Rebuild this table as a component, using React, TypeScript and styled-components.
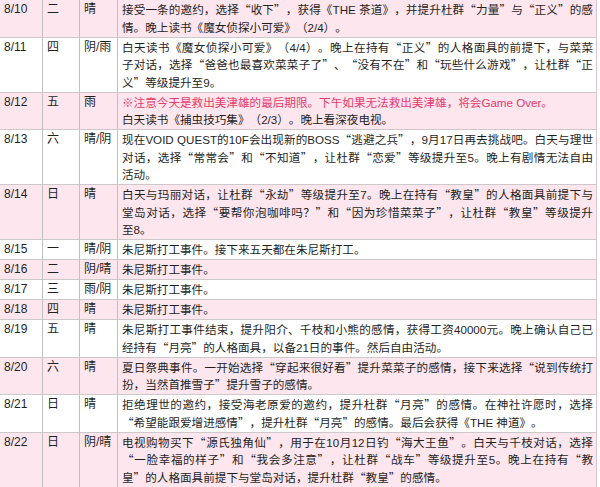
import React from "react";
import styled, { createGlobalStyle } from "styled-components";

interface Entry {
  date: string;
  day: string;
  weather: string;
  warning?: string;
  lines: string[];
}

const GlobalStyle = createGlobalStyle`
  html, body {
    margin: 0;
    padding: 0;
    background: #ffffff;
  }
`;

const Page = styled.div`
  width: 600px;
  height: 487px;
  overflow: hidden;
  background: #ffffff;
`;

const Table = styled.table`
  width: 597px;
  table-layout: fixed;
  border-collapse: separate;
  border-spacing: 0;
  font-family: "Liberation Sans", "Noto Sans CJK SC", sans-serif;
  font-size: 12px;
  line-height: 17.5px;
  color: #1f1f1f;
  border-right: 1px solid #d9c6cc;
`;

const Row = styled.tr<{ $pink: boolean }>`
  background: ${(p) => (p.$pink ? "#fde6ee" : "#ffffff")};
`;

const Cell = styled.td<{ $text?: boolean }>`
  vertical-align: top;
  padding: ${(p) => (p.$text ? "1px 3px 0.5px 4px" : "1px 4px 0.5px")};
  border-bottom: 1px solid #cfc8ca;
  border-right: ${(p) => (p.$text ? "none" : "1px solid #c4c0c1")};
  font-size: ${(p) => (p.$text ? "11.6px" : "12px")};
  white-space: ${(p) => (p.$text ? "normal" : "nowrap")};
  text-spacing-trim: space-all;
`;

const Line = styled.div<{ $fill: boolean }>`
  word-break: keep-all;
  text-align: ${(p) => (p.$fill ? "justify" : "left")};
  text-align-last: ${(p) => (p.$fill ? "justify" : "left")};
`;

const Warning = styled.div`
  color: #e8396c;
  word-break: keep-all;
`;

// Chinese quotes are full width in the source, so take them from the CJK font
const Quote = styled.span`
  font-family: "Noto Sans CJK SC", sans-serif;
`;

const entries: Entry[] = [
  {
    date: "8/10",
    day: "二",
    weather: "晴",
    lines: [
      "接受一条的邀约，选择“收下”，获得《THE 茶道》，并提升杜群“力量”与“正义”的感",
      "情。晚上读书《魔女侦探小可爱》（2/4）。",
    ],
  },
  {
    date: "8/11",
    day: "四",
    weather: "阴/雨",
    lines: [
      "白天读书《魔女侦探小可爱》（4/4）。晚上在持有“正义”的人格面具的前提下，与菜菜",
      "子对话，选择“爸爸也最喜欢菜菜子了”、“没有不在”和“玩些什么游戏”，让杜群“正",
      "义”等级提升至9。",
    ],
  },
  {
    date: "8/12",
    day: "五",
    weather: "雨",
    warning: "※注意今天是救出美津雄的最后期限。下午如果无法救出美津雄，将会Game Over。",
    lines: ["白天读书《捕虫技巧集》（2/3）。晚上看深夜电视。"],
  },
  {
    date: "8/13",
    day: "六",
    weather: "晴/阴",
    lines: [
      "现在VOID QUEST的10F会出现新的BOSS“逃避之兵”，9月17日再去挑战吧。白天与理世",
      "对话，选择“常常会”和“不知道”，让杜群“恋爱”等级提升至5。晚上有剧情无法自由",
      "活动。",
    ],
  },
  {
    date: "8/14",
    day: "日",
    weather: "晴",
    lines: [
      "白天与玛丽对话，让杜群“永劫”等级提升至7。晚上在持有“教皇”的人格面具前提下与",
      "堂岛对话，选择“要帮你泡咖啡吗？”和“因为珍惜菜菜子”，让杜群“教皇”等级提升",
      "至8。",
    ],
  },
  {
    date: "8/15",
    day: "一",
    weather: "晴/阴",
    lines: ["朱尼斯打工事件。接下来五天都在朱尼斯打工。"],
  },
  { date: "8/16", day: "二", weather: "阴/晴", lines: ["朱尼斯打工事件。"] },
  { date: "8/17", day: "三", weather: "雨/阴", lines: ["朱尼斯打工事件。"] },
  { date: "8/18", day: "四", weather: "晴", lines: ["朱尼斯打工事件。"] },
  {
    date: "8/19",
    day: "五",
    weather: "晴",
    lines: [
      "朱尼斯打工事件结束，提升阳介、千枝和小熊的感情，获得工资40000元。晚上确认自己已",
      "经持有“月亮”的人格面具，以备21日的事件。然后自由活动。",
    ],
  },
  {
    date: "8/20",
    day: "六",
    weather: "晴",
    lines: [
      "夏日祭典事件。一开始选择“穿起来很好看”提升菜菜子的感情，接下来选择“说到传统打",
      "扮，当然首推雪子”提升雪子的感情。",
    ],
  },
  {
    date: "8/21",
    day: "日",
    weather: "晴",
    lines: [
      "拒绝理世的邀约，接受海老原爱的邀约，提升杜群“月亮”的感情。在神社许愿时，选择",
      "“希望能跟爱增进感情”，提升杜群“月亮”的感情。最后会获得《THE 神道》。",
    ],
  },
  {
    date: "8/22",
    day: "日",
    weather: "阴/晴",
    lines: [
      "电视购物买下“源氏独角仙”，用于在10月12日钓“海大王鱼”。白天与千枝对话，选择",
      "“一脸幸福的样子”和“我会多注意”，让杜群“战车”等级提升至5。晚上在持有“教",
      "皇”的人格面具前提下与堂岛对话，提升杜群“教皇”的感情。",
    ],
  },
];

// keep latin words together and give quotes the CJK glyph
function renderText(s: string) {
  return s
    .replace(/ /g, "\u00a0")
    .split(/([“”])/)
    .map((part, k) =>
      part === "“" || part === "”" ? <Quote key={k}>{part}</Quote> : part
    );
}

export default function App() {
  return (
    <Page>
      <GlobalStyle />
      <Table>
        <colgroup>
          <col style={{ width: 43 }} />
          <col style={{ width: 37 }} />
          <col style={{ width: 38 }} />
          <col />
        </colgroup>
        <tbody>
          {entries.map((e, i) => (
            <Row key={e.date} $pink={i % 2 === 0}>
              <Cell>{e.date}</Cell>
              <Cell>{e.day}</Cell>
              <Cell>{e.weather}</Cell>
              <Cell $text>
                {e.warning && <Warning>{renderText(e.warning)}</Warning>}
                {e.lines.map((line, j) => (
                  <Line key={j} $fill={j < e.lines.length - 1}>
                    {renderText(line)}
                  </Line>
                ))}
              </Cell>
            </Row>
          ))}
        </tbody>
      </Table>
    </Page>
  );
}
